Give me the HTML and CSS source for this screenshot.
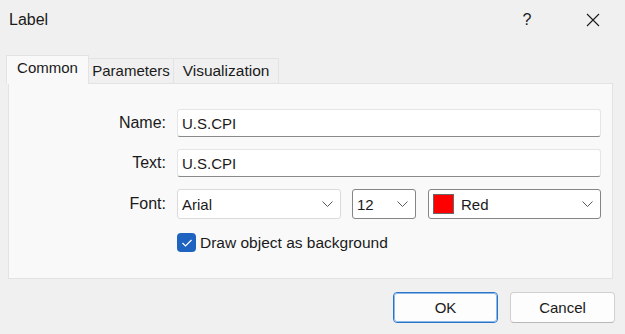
FILE: index.html
```html
<!DOCTYPE html>
<html>
<head>
  <meta charset="utf-8">
  <title>Label</title>
  <link rel="stylesheet" href="styles.css">
</head>
<body>
  <div class="dialog">
    <div class="titlebar">
      <span class="title">Label</span>
      <span class="caption-btn help">?</span>
      <span class="caption-btn close">
        <svg width="14" height="14" viewBox="0 0 14 14"><path d="M1 1 L13 13 M13 1 L1 13" stroke="#1a1a1a" stroke-width="1.1" fill="none"/></svg>
      </span>
    </div>

    <div class="tabs">
      <div class="tab active tab-common">Common</div>
      <div class="tab tab-params">Parameters</div>
      <div class="tab tab-visual">Visualization</div>
    </div>

    <div class="panel">
      <div class="form">
        <label class="field-label">Name:</label>
        <div class="textbox">U.S.CPI</div>

        <label class="field-label">Text:</label>
        <div class="textbox">U.S.CPI</div>

        <label class="field-label font-label">Font:</label>
        <div class="font-row">
          <div class="combo combo-font">
            <span>Arial</span>
            <svg class="chevron" width="11" height="6" viewBox="0 0 11 6"><path d="M0.5 0.5 L5.5 5.5 L10.5 0.5" stroke="#5a5a5a" stroke-width="1" fill="none"/></svg>
          </div>
          <div class="combo combo-size dark">
            <span>12</span>
            <svg class="chevron" width="11" height="6" viewBox="0 0 11 6"><path d="M0.5 0.5 L5.5 5.5 L10.5 0.5" stroke="#5a5a5a" stroke-width="1" fill="none"/></svg>
          </div>
          <div class="combo combo-color dark">
            <span class="swatch"></span>
            <span class="color-name">Red</span>
            <svg class="chevron" width="11" height="6" viewBox="0 0 11 6"><path d="M0.5 0.5 L5.5 5.5 L10.5 0.5" stroke="#5a5a5a" stroke-width="1" fill="none"/></svg>
          </div>
        </div>

        <span></span>
        <div class="check-row">
          <span class="checkbox">
            <svg width="12" height="10" viewBox="0 0 12 10"><path d="M1.5 5 L4.5 8 L10.5 2" stroke="#fff" stroke-width="1.2" fill="none"/></svg>
          </span>
          <span>Draw object as background</span>
        </div>
      </div>
    </div>

    <div class="buttons">
      <button class="btn default">OK</button>
      <button class="btn">Cancel</button>
    </div>
  </div>
</body>
</html>
```

FILE: styles.css
```css
body {
  margin: 0;
  font-family: "Liberation Sans", Arial, sans-serif;
  font-size: 15px;
  color: #1a1a1a;
}
.dialog {
  width: 625px;
  height: 334px;
  background-color: #f0f0f0;
  overflow: hidden;
}
.titlebar {
  height: 40px;
  display: flex;
  align-items: center;
  padding-left: 9px;
}
.title {
  flex: 1;
  font-size: 16px;
}
.caption-btn {
  width: 46px;
  height: 40px;
  display: flex;
  align-items: center;
  justify-content: center;
}
.help {
  font-size: 16px;
  margin-right: 20px;
}
.close {
  margin-right: 9px;
}
.tabs {
  display: flex;
  align-items: flex-end;
  height: 28px;
  margin: 15px 0 0 6px;
}
.tab {
  height: 25px;
  padding-bottom: 1px;
  display: flex;
  align-items: center;
  justify-content: center;
  border: 1px solid #e3e3e3;
  border-bottom: none;
  border-left: none;
  background-color: #f0f0f0;
  box-sizing: border-box;
}
.tab.active {
  height: 29px;
  margin-bottom: -1px;
  padding-bottom: 6px;
  border-left: 1px solid #e3e3e3;
  background-color: #f9f9f9;
}
.tab-common {
  width: 83px;
}
.tab-params {
  width: 85px;
}
.tab-visual {
  width: 105px;
  font-size: 15.5px;
}
.panel {
  margin: 0 12px 0 8px;
  height: 196px;
  box-sizing: border-box;
  background-color: #f9f9f9;
  border: 1px solid #e3e3e3;
}
.form {
  display: grid;
  grid-template-columns: 157px 1fr;
  column-gap: 11px;
  row-gap: 12px;
  padding: 25px 11px 0 0;
}
.field-label {
  text-align: right;
  align-self: center;
  font-size: 16px;
}
.textbox {
  height: 28px;
  box-sizing: border-box;
  background-color: #fff;
  border: 1px solid #e5e5e5;
  border-bottom: 1px solid #8a8a8a;
  border-radius: 3px;
  padding: 0 4px;
  display: flex;
  align-items: center;
}
.font-row {
  display: flex;
  gap: 11px;
  height: 30px;
}
.combo {
  height: 30px;
  box-sizing: border-box;
  background-color: #fff;
  border: 1px solid #dadada;
  border-radius: 3px;
  display: flex;
  align-items: center;
  padding: 0 7px 0 4px;
}
.combo.dark {
  border-color: #858585;
}
.combo-font {
  width: 164px;
}
.combo-size {
  width: 64px;
  margin-right: 1px;
}
.combo-color {
  flex: 1;
  padding-left: 4px;
}
.combo span {
  flex: 1;
}
.chevron {
  flex: none;
}
.combo .swatch {
  flex: none;
  width: 19px;
  height: 18px;
  background-color: #ff0000;
  border: 1px solid #6a6a6a;
  margin-right: 7px;
}
.check-row {
  display: flex;
  align-items: center;
  gap: 4px;
  margin-top: 2px;
  font-size: 15.5px;
}
.checkbox {
  width: 19px;
  height: 19px;
  border-radius: 4px;
  background-color: #1f63c1;
  display: flex;
  align-items: center;
  justify-content: center;
}
.buttons {
  display: flex;
  justify-content: flex-end;
  gap: 12px;
  padding: 13px 10px 0 0;
}
.btn {
  width: 105px;
  height: 31px;
  font-family: "Liberation Sans", Arial, sans-serif;
  font-size: 15px;
  color: #1a1a1a;
  background-color: #fdfdfd;
  border: 1px solid #d0d0d0;
  border-bottom-color: #b8b8b8;
  border-radius: 4px;
}
.btn.default {
  border: 1px solid #2b74c8;
  outline: 1px solid #8cb8e8;
  outline-offset: -2px;
}
```
